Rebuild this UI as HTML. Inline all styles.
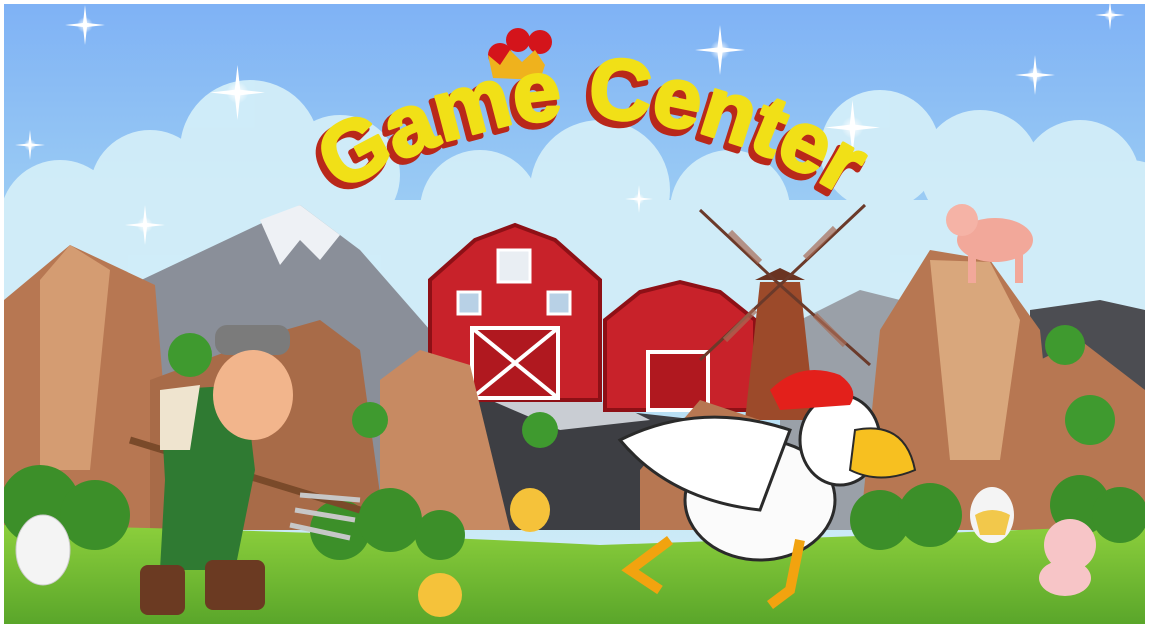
<!DOCTYPE html>
<html><head><meta charset="utf-8"><style>
html,body{margin:0;padding:0;background:#fff;width:1149px;height:629px;overflow:hidden}
svg{display:block}
</style></head><body>
<svg width="1149" height="629" viewBox="0 0 1149 629" xmlns="http://www.w3.org/2000/svg">
<defs>
<linearGradient id="sky" x1="0" y1="0" x2="0" y2="1">
<stop offset="0" stop-color="#7fb2f5"/><stop offset="0.45" stop-color="#a6d6f3"/><stop offset="1" stop-color="#d8f1f8"/>
</linearGradient>
<linearGradient id="grass" x1="0" y1="0" x2="0" y2="1">
<stop offset="0" stop-color="#8ccf3c"/><stop offset="1" stop-color="#5aa62a"/>
</linearGradient>
<radialGradient id="star"><stop offset="0" stop-color="#fff"/><stop offset="0.3" stop-color="#fff" stop-opacity=".7"/><stop offset="1" stop-color="#fff" stop-opacity="0"/></radialGradient>
<symbol id="sp" viewBox="-20 -20 40 40"><circle r="8" fill="url(#star)"/><path d="M0-20L2-2 20 0 2 2 0 20-2 2-20 0-2-2Z" fill="#fff"/></symbol>
<clipPath id="sc"><rect x="4" y="4" width="1141" height="620"/></clipPath>
</defs>
<g clip-path="url(#sc)">
<rect x="4" y="4" width="1141" height="620" fill="url(#sky)"/>
<g fill="#d3eef9" opacity=".95">
<circle cx="250" cy="150" r="70"/><circle cx="150" cy="190" r="60"/><circle cx="340" cy="175" r="60"/><circle cx="60" cy="220" r="60"/>
<circle cx="480" cy="210" r="60"/><circle cx="600" cy="190" r="70"/><circle cx="730" cy="210" r="60"/>
<circle cx="880" cy="150" r="60"/><circle cx="980" cy="170" r="60"/><circle cx="1080" cy="180" r="60"/><circle cx="1130" cy="210" r="50"/>
<rect x="4" y="200" width="1141" height="200"/>
</g>
<path d="M120 290 L300 205 L360 250 L430 330 L470 380 L470 530 L120 530Z" fill="#8a8f99"/>
<path d="M260 220 L300 205 L340 235 L320 260 L300 240 L280 265Z" fill="#eef1f5"/>
<path d="M780 330 L860 290 L900 300 L900 530 L780 530Z" fill="#9aa0a8"/>
<path d="M1030 310 L1100 300 L1145 310 L1145 530 L1030 530Z" fill="#4c4d52"/>
<path d="M430 330 L520 400 L610 410 L700 420 L740 530 L430 530Z" fill="#3d3e43"/>
<path d="M470 360 L540 395 L620 405 L650 420 L560 430 L490 400Z" fill="#c9cdd3"/>
<path d="M430 280 L475 240 L515 225 L555 240 L600 280 L600 400 L430 400Z" fill="#c8222a" stroke="#8e1016" stroke-width="4"/>
<rect x="498" y="250" width="32" height="32" fill="#e9eef3" stroke="#fff" stroke-width="3"/>
<rect x="458" y="292" width="22" height="22" fill="#b8d1e6" stroke="#fff" stroke-width="3"/>
<rect x="548" y="292" width="22" height="22" fill="#b8d1e6" stroke="#fff" stroke-width="3"/>
<rect x="472" y="328" width="86" height="70" fill="#b0181f" stroke="#fff" stroke-width="4"/>
<path d="M472 328 L558 398 M558 328 L472 398" stroke="#fff" stroke-width="4"/>
<path d="M605 320 L640 292 L680 282 L720 292 L755 320 L755 410 L605 410Z" fill="#c8222a" stroke="#8e1016" stroke-width="4"/>
<rect x="648" y="352" width="60" height="58" fill="#b0181f" stroke="#fff" stroke-width="4"/>
<path d="M760 282 L800 282 L815 420 L745 420Z" fill="#9c4a2a"/>
<path d="M755 280 L780 268 L805 280Z" fill="#6a3422"/>
<g stroke="#6b3a2a" stroke-width="3" fill="none">
<path d="M780 285 L700 210 M780 285 L865 205 M780 285 L700 360 M780 285 L870 365"/>
</g>
<g fill="none" stroke="#a66b55" stroke-width="6" opacity=".7">
<path d="M730 232 L760 262 M835 228 L805 258 M725 340 L755 310 M845 345 L815 315"/>
</g>
<path d="M4 300 L70 245 L155 285 L175 530 L4 530Z" fill="#b77752"/>
<path d="M40 280 L70 245 L110 270 L90 470 L40 470Z" fill="#d49c72"/>
<path d="M150 380 L285 330 L320 320 L360 350 L385 530 L150 530Z" fill="#a86b48"/>
<path d="M380 380 L420 350 L470 365 L510 530 L380 530Z" fill="#c78a62"/>
<path d="M880 330 L930 250 L990 260 L1040 330 L1060 530 L860 530Z" fill="#b77752"/>
<path d="M930 260 L990 262 L1020 320 L1000 460 L950 460Z" fill="#d9a77c"/>
<path d="M1040 360 L1080 340 L1145 390 L1145 530 L1040 530Z" fill="#b77752"/>
<path d="M640 470 L700 400 L760 420 L780 530 L640 530Z" fill="#b77752"/>
<g fill="#3f9a2f">
<circle cx="190" cy="355" r="22"/><circle cx="1065" cy="345" r="20"/><circle cx="1090" cy="420" r="25"/>
<circle cx="370" cy="420" r="18"/><circle cx="540" cy="430" r="18"/>
</g>
<path d="M4 525 Q300 530 600 545 Q900 535 1145 525 L1145 624 L4 624Z" fill="url(#grass)"/>
<g fill="#3c8f29">
<circle cx="40" cy="505" r="40"/><circle cx="95" cy="515" r="35"/><circle cx="340" cy="530" r="30"/><circle cx="390" cy="520" r="32"/><circle cx="440" cy="535" r="25"/>
<circle cx="880" cy="520" r="30"/><circle cx="930" cy="515" r="32"/><circle cx="1080" cy="505" r="30"/><circle cx="1120" cy="515" r="28"/>
</g>
<ellipse cx="43" cy="550" rx="27" ry="35" fill="#f4f4f4" stroke="#ccc"/>
<ellipse cx="992" cy="515" rx="22" ry="28" fill="#f4f4f4"/>
<path d="M975 515 Q992 505 1010 515 L1005 535 L980 535Z" fill="#f2c84b"/>
<path d="M130 440 L360 510" stroke="#7a4a2a" stroke-width="7"/>
<path d="M300 495 L360 500 M295 510 L355 520 M290 525 L350 538" stroke="#c7c7c7" stroke-width="5"/>
<path d="M160 390 L245 385 L255 470 L235 570 L160 570 L165 480Z" fill="#2f7a32"/>
<path d="M160 390 L200 385 L190 450 L160 450Z" fill="#efe4cf"/>
<rect x="215" y="325" width="75" height="30" rx="12" fill="#7b7b7b"/>
<ellipse cx="253" cy="395" rx="40" ry="45" fill="#f2b58c"/>
<rect x="140" y="565" width="45" height="50" rx="8" fill="#6b3a22"/>
<rect x="205" y="560" width="60" height="50" rx="8" fill="#6b3a22"/>
<ellipse cx="760" cy="500" rx="75" ry="60" fill="#fbfbfb" stroke="#2a2a2a" stroke-width="3"/>
<path d="M620 440 Q700 400 790 430 L760 510 Q670 500 620 440Z" fill="#fff" stroke="#2a2a2a" stroke-width="3"/>
<ellipse cx="840" cy="440" rx="40" ry="45" fill="#fff" stroke="#2a2a2a" stroke-width="3"/>
<path d="M770 390 Q800 360 840 375 Q860 390 850 405 L780 410Z" fill="#e3201b"/>
<path d="M855 430 Q905 420 915 470 Q880 485 850 470Z" fill="#f7c020" stroke="#2a2a2a" stroke-width="2"/>
<path d="M670 540 L630 570 L660 590 M800 540 L790 590 L770 605" stroke="#f2a30f" stroke-width="10" fill="none"/>
<ellipse cx="995" cy="240" rx="38" ry="22" fill="#f2a89a"/>
<circle cx="962" cy="220" r="16" fill="#f5b3a6"/>
<rect x="968" y="255" width="8" height="28" fill="#f2a89a"/><rect x="1015" y="255" width="8" height="28" fill="#f2a89a"/>
<circle cx="1070" cy="545" r="26" fill="#f7c5c7"/>
<ellipse cx="1065" cy="578" rx="26" ry="18" fill="#f7c5c7"/>
<ellipse cx="530" cy="510" rx="20" ry="22" fill="#f5c23a"/>
<ellipse cx="440" cy="595" rx="22" ry="22" fill="#f5c23a"/>
<use href="#sp" x="65" y="5" width="40" height="40"/>
<use href="#sp" x="210" y="65" width="55" height="55"/>
<use href="#sp" x="15" y="130" width="30" height="30"/>
<use href="#sp" x="125" y="205" width="40" height="40"/>
<use href="#sp" x="695" y="25" width="50" height="50"/>
<use href="#sp" x="825" y="100" width="55" height="55"/>
<use href="#sp" x="1015" y="55" width="40" height="40"/>
<use href="#sp" x="625" y="185" width="28" height="28"/>
<use href="#sp" x="1095" y="0" width="30" height="30"/>
<circle cx="500" cy="55" r="12" fill="#d4141b"/><circle cx="518" cy="40" r="12" fill="#d4141b"/><circle cx="540" cy="42" r="12" fill="#d4141b"/>
<path d="M488 55 L500 65 L510 50 L522 62 L535 50 L545 65 L540 80 L493 78Z" fill="#efb21d"/>
<path id="arc" d="M305 214 Q590 20 878 218" fill="none"/>
<text font-family="'Liberation Sans',sans-serif" font-weight="bold" font-size="86" fill="#b9281a" stroke="#b9281a" stroke-width="6" stroke-linejoin="round" transform="translate(-4,5)"><textPath href="#arc" startOffset="50%" text-anchor="middle">Game Center</textPath></text>
<text font-family="'Liberation Sans',sans-serif" font-weight="bold" font-size="86" fill="#f1e017" stroke="#f1e017" stroke-width="3" stroke-linejoin="round"><textPath href="#arc" startOffset="50%" text-anchor="middle">Game Center</textPath></text>
</g>
</svg>
</body></html>
